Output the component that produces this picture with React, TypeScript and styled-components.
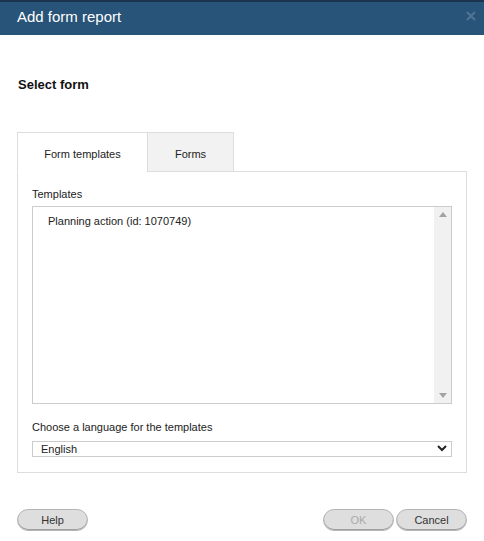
import React from "react";
import styled, { createGlobalStyle } from "styled-components";

const Global = createGlobalStyle`
  html, body { margin: 0; padding: 0; background: #fff; }
  body { font-family: Arial, "Liberation Sans", sans-serif; color: #222; }
  * { box-sizing: border-box; }
`;

const Dialog = styled.div`
  width: 484px;
  height: 541px;
  display: flex;
  flex-direction: column;
  background: #fff;
`;

const TopStrip = styled.div`
  height: 2px;
  background: #1b3550;
`;

const Header = styled.div`
  height: 35px;
  background: #285479;
  display: flex;
  align-items: center;
  justify-content: space-between;
  padding: 0 7px 0 17px;
`;

const Title = styled.div`
  color: #fff;
  font-size: 15px;
  margin-top: -3px;
`;

const Close = styled.div`
  width: 12px;
  height: 12px;
  margin-top: -4px;
  display: flex;
`;

const Body = styled.div`
  flex: 1;
  padding: 0 17px;
  display: flex;
  flex-direction: column;
`;

const Heading = styled.div`
  font-weight: bold;
  font-size: 13px;
  color: #111;
  margin-top: 42px;
  padding-left: 1px;
  height: 15px;
`;

const Tabs = styled.div`
  display: flex;
  margin-top: 40px;
`;

const Tab = styled.div<{ $active?: boolean }>`
  height: 40px;
  display: flex;
  align-items: center;
  justify-content: center;
  font-size: 11px;
  color: #222;
  border: 1px solid #ddd;
  border-bottom: ${(p) => (p.$active ? "1px solid #fff" : "1px solid #ddd")};
  background: ${(p) => (p.$active ? "#fff" : "#f2f2f2")};
  width: ${(p) => (p.$active ? "131px" : "87px")};
  margin-left: ${(p) => (p.$active ? "0" : "-1px")};
  padding-top: 4px;
  position: relative;
  z-index: 1;
`;

const Panel = styled.div`
  border: 1px solid #ddd;
  margin-top: -1px;
  height: 302px;
  padding: 16px 14px 0 14px;
  display: flex;
  flex-direction: column;
`;

const Label = styled.div`
  font-size: 11px;
  color: #222;
  height: 13px;
  line-height: 13px;
`;

const ListBox = styled.div`
  margin-top: 5px;
  height: 198px;
  border: 1px solid #ccc;
  display: flex;
`;

const ListItems = styled.div`
  flex: 1;
  padding: 8px 0 0 15px;
  font-size: 11px;
  color: #222;
`;

const ScrollBar = styled.div`
  width: 17px;
  background: #f1f1f1;
  display: flex;
  flex-direction: column;
  justify-content: space-between;
  align-items: center;
  padding: 5px 0;
`;

const LangLabel = styled(Label)`
  margin-top: 17px;
`;

const Select = styled.div`
  margin-top: 7px;
  height: 16px;
  border: 1px solid #ccc;
  display: flex;
  align-items: center;
  justify-content: space-between;
  padding: 0 4px 0 8px;
  font-size: 11px;
  color: #222;
`;

const Footer = styled.div`
  display: flex;
  justify-content: space-between;
  padding: 36px 17px 0 17px;
`;

const Group = styled.div`
  display: flex;
  gap: 2px;
`;

const Button = styled.div<{ $disabled?: boolean }>`
  width: 71px;
  height: 22px;
  border-radius: 11px;
  background: #dedede;
  border: 1px solid #b5b5b5;
  box-shadow: inset 0 -1px 0 #9f9f9f;
  display: flex;
  align-items: center;
  justify-content: center;
  font-size: 11px;
  color: ${(p) => (p.$disabled ? "#aaa" : "#333")};
`;

const Spacer = styled.div`
  height: 11px;
`;

export default function App() {
  return (
    <Dialog>
      <Global />
      <TopStrip />
      <Header>
        <Title>Add form report</Title>
        <Close>
          <svg width="12" height="12" viewBox="0 0 12 12">
            <path d="M2 2 L10 10 M10 2 L2 10" stroke="#4f7394" strokeWidth="2.2" />
          </svg>
        </Close>
      </Header>
      <Body>
        <Heading>Select form</Heading>
        <Tabs>
          <Tab $active>Form templates</Tab>
          <Tab>Forms</Tab>
        </Tabs>
        <Panel>
          <Label>Templates</Label>
          <ListBox>
            <ListItems>Planning action (id: 1070749)</ListItems>
            <ScrollBar>
              <svg width="8" height="5" viewBox="0 0 8 5">
                <path d="M0 5 L4 0 L8 5 Z" fill="#a3a3a3" />
              </svg>
              <svg width="8" height="5" viewBox="0 0 8 5">
                <path d="M0 0 L4 5 L8 0 Z" fill="#a3a3a3" />
              </svg>
            </ScrollBar>
          </ListBox>
          <LangLabel>Choose a language for the templates</LangLabel>
          <Select>
            <span>English</span>
            <svg width="10" height="7" viewBox="0 0 10 7">
              <path d="M1 1 L5 5 L9 1" stroke="#222" strokeWidth="2" fill="none" />
            </svg>
          </Select>
        </Panel>
      </Body>
      <Footer>
        <Button>Help</Button>
        <Group>
          <Button $disabled>OK</Button>
          <Button>Cancel</Button>
        </Group>
      </Footer>
      <Spacer />
    </Dialog>
  );
}
